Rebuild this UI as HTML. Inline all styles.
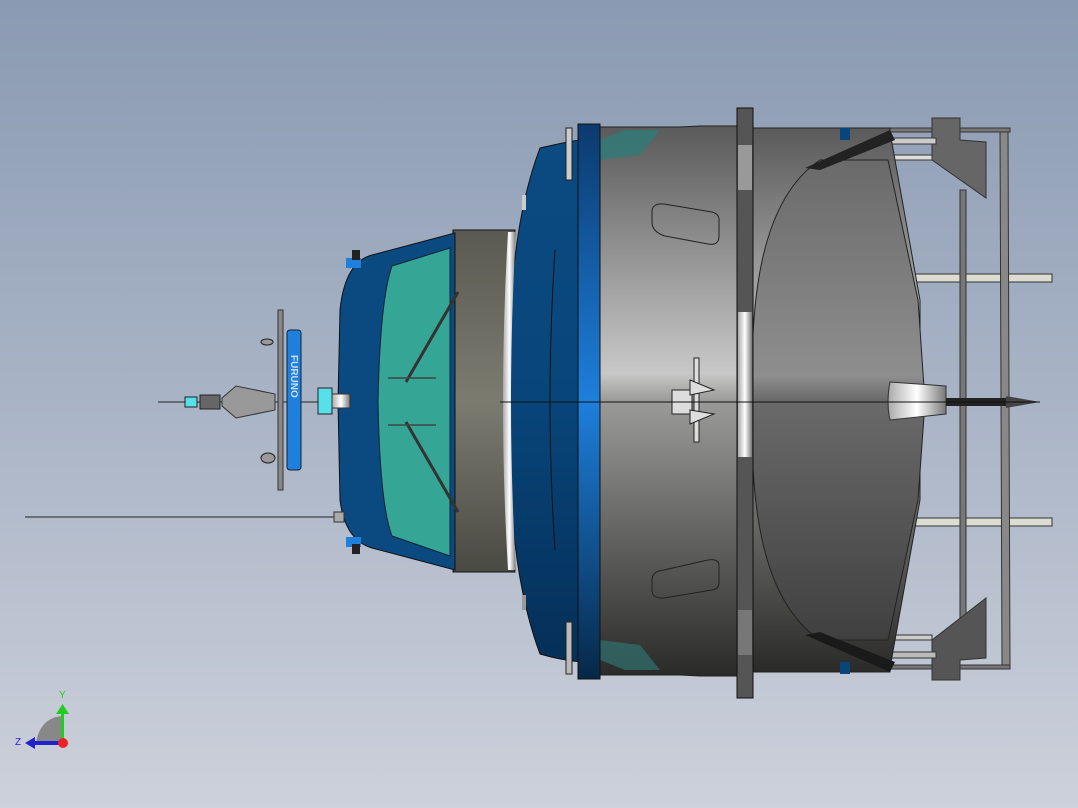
<!DOCTYPE html>
<html><head><meta charset="utf-8"><style>
html,body{margin:0;padding:0;width:1078px;height:808px;overflow:hidden}
body{background:linear-gradient(#8a9ab2,#a9b4c6 50%,#cdd1db);font-family:"Liberation Sans",sans-serif}
svg{position:absolute;left:0;top:0}
</style></head><body>
<svg width="1078" height="808" viewBox="0 0 1078 808">
<defs>
<linearGradient id="gbody" x1="0" y1="0" x2="0" y2="1">
<stop offset="0" stop-color="#5a5a5a"/><stop offset="0.45" stop-color="#c8c8c8"/><stop offset="0.5" stop-color="#9a9a98"/><stop offset="1" stop-color="#2a2a28"/></linearGradient>
<linearGradient id="gdome" x1="0" y1="0" x2="0" y2="1">
<stop offset="0" stop-color="#6a6a6a"/><stop offset="0.45" stop-color="#8e8e8e"/><stop offset="0.5" stop-color="#6a6a6a"/><stop offset="1" stop-color="#404040"/></linearGradient>
<linearGradient id="gring" x1="0" y1="0" x2="0" y2="1">
<stop offset="0" stop-color="#0b3a6e"/><stop offset="0.5" stop-color="#1e7fdc"/><stop offset="1" stop-color="#062848"/></linearGradient>
<linearGradient id="gdisk" x1="0" y1="0" x2="0" y2="1">
<stop offset="0" stop-color="#0b4b82"/><stop offset="0.5" stop-color="#08457a"/><stop offset="1" stop-color="#052f58"/></linearGradient>
<linearGradient id="gcol" x1="0" y1="0" x2="0" y2="1">
<stop offset="0" stop-color="#5a5a52"/><stop offset="0.5" stop-color="#7b7b70"/><stop offset="1" stop-color="#4a4a44"/></linearGradient>
<linearGradient id="gsh" x1="0" y1="0" x2="1" y2="0">
<stop offset="0" stop-color="#aaa"/><stop offset="0.5" stop-color="#fff"/><stop offset="1" stop-color="#777"/></linearGradient>
</defs>
<!-- rear frame -->
<g stroke="#333" stroke-width="1">
<rect x="905" y="274" width="147" height="8" fill="#dcdcd0"/>
<rect x="905" y="518" width="147" height="8" fill="#dcdcd0"/>
<rect x="960" y="190" width="6" height="440" fill="#777"/>
<path d="M1000 128 L1008 130 L1010 665 L1002 668 Z" fill="#888"/>
<rect x="890" y="128" width="120" height="4" fill="#777"/>
<rect x="890" y="665" width="120" height="4" fill="#777"/>
<path d="M932 118 L960 118 L960 140 L986 142 L986 198 L932 160 Z" fill="#666"/>
<path d="M932 680 L960 680 L960 660 L986 658 L986 598 L932 640 Z" fill="#555"/>
<rect x="888" y="138" width="48" height="6" fill="#ccc"/><rect x="892" y="155" width="40" height="5" fill="#ddd"/>
<rect x="888" y="652" width="48" height="6" fill="#bbb"/><rect x="892" y="635" width="40" height="5" fill="#ccc"/>
</g>
<!-- main body -->
<path d="M597 127 L680 127 L700 126 L740 126 L740 676 L700 676 L680 675 L597 675 Z" fill="url(#gbody)" stroke="#222"/>
<path d="M600 140 L625 130 L660 130 L640 155 L600 160 Z" fill="#2f7a78" opacity="0.8"/>
<path d="M600 660 L625 670 L660 670 L640 645 L600 640 Z" fill="#2f6a68" opacity="0.8"/>
<!-- aft section -->
<path d="M752 128 L890 128 L890 132 L920 300 L920 500 L890 668 L890 672 L752 672 Z" fill="url(#gbody)" stroke="#222"/>
<path d="M820 160 C760 200 750 300 752 402 C750 500 760 600 820 640 L888 640 L918 500 L925 402 L918 300 L888 160 Z" fill="url(#gdome)" stroke="#222"/>
<rect x="840" y="128" width="10" height="12" fill="#08457a"/><rect x="840" y="662" width="10" height="12" fill="#08457a"/>
<path d="M805 168 L890 130 L895 140 L820 170 Z" fill="#222"/>
<path d="M805 635 L890 672 L895 662 L820 632 Z" fill="#1a1a1a"/>
<!-- flange -->
<rect x="737" y="108" width="16" height="590" fill="#555" stroke="#111"/>
<rect x="738" y="145" width="14" height="45" fill="#999"/>
<rect x="738" y="312" width="14" height="145" fill="url(#gsh)"/>
<rect x="738" y="610" width="14" height="45" fill="#777"/>
<!-- windows -->
<path d="M652 212 Q652 203 664 204 L712 212 Q720 214 719 222 L719 236 Q719 246 708 244 L665 236 Q652 232 652 222 Z" fill="none" stroke="#222"/>
<path d="M652 580 Q652 571 664 570 L708 560 Q719 558 719 566 L719 580 Q720 589 712 590 L664 598 Q652 599 652 590 Z" fill="none" stroke="#222"/>
<!-- fitting -->
<g stroke="#222" fill="#ddd"><rect x="672" y="390" width="20" height="24"/><rect x="694" y="358" width="5" height="84"/><path d="M690 380 L714 390 L690 395 Z"/><path d="M690 424 L714 414 L690 410 Z"/></g>
<!-- exhaust cone -->
<path d="M890 382 L946 386 L946 414 L890 420 Q886 402 890 382 Z" fill="url(#gsh)" stroke="#333"/>
<rect x="946" y="398" width="60" height="8" fill="#222"/>
<path d="M1006 396 L1040 402 L1006 408 Z" fill="#444"/>
<!-- blue disk -->
<path d="M540 148 Q575 140 582 140 L582 662 Q560 660 540 654 Q505 560 510 402 Q505 240 540 148 Z" fill="url(#gdisk)" stroke="#111"/>
<path d="M555 250 Q545 402 555 550" fill="none" stroke="#111"/>
<rect x="522" y="195" width="4" height="15" fill="#ccc"/><rect x="522" y="595" width="4" height="15" fill="#999"/>
<!-- blue ring -->
<rect x="578" y="124" width="22" height="555" fill="url(#gring)" stroke="#111"/>
<path d="M566 128 L572 128 L572 180 L566 180 Z" fill="#ccc" stroke="#222"/>
<path d="M566 622 L572 622 L572 674 L566 674 Z" fill="#bbb" stroke="#222"/>
<!-- collar -->
<path d="M453 230 L515 230 Q505 402 515 572 L453 572 Z" fill="url(#gcol)" stroke="#111"/>
<path d="M508 232 Q498 402 508 570 L516 570 Q506 402 516 232 Z" fill="url(#gsh)"/>
<!-- cabin -->
<path d="M455 233 L372 255 Q345 262 340 310 L338 402 L340 500 Q345 540 372 548 L455 570 Z" fill="#0a4a80" stroke="#111"/>
<path d="M450 248 L392 266 Q380 300 378 402 Q380 505 392 536 L450 556 Z" fill="#35a595" stroke="#123"/>
<g stroke="#333" stroke-width="3"><line x1="458" y1="292" x2="406" y2="382"/><line x1="406" y1="422" x2="458" y2="512"/></g>
<g stroke="#444" stroke-width="1.5"><line x1="388" y1="378" x2="436" y2="378"/><line x1="388" y1="425" x2="436" y2="425"/></g>
<rect x="346" y="258" width="15" height="10" fill="#1e7fdc"/><rect x="352" y="250" width="8" height="10" fill="#222"/>
<rect x="346" y="537" width="15" height="10" fill="#1e7fdc"/><rect x="352" y="544" width="8" height="10" fill="#222"/>
<!-- mast -->
<line x1="158" y1="402" x2="340" y2="402" stroke="#222"/>
<line x1="25" y1="517" x2="340" y2="517" stroke="#222"/>
<rect x="334" y="512" width="10" height="10" fill="#aaa" stroke="#333"/>
<rect x="318" y="388" width="14" height="26" fill="#55e0ea" stroke="#222"/>
<rect x="332" y="394" width="18" height="14" fill="url(#gsh)" stroke="#333"/>
<path d="M222 398 L236 386 L275 394 L275 410 L236 418 L222 406 Z" fill="#999" stroke="#333"/>
<rect x="185" y="397" width="12" height="10" fill="#55e0ea" stroke="#222"/>
<rect x="200" y="395" width="20" height="14" fill="#666" stroke="#222"/>
<rect x="278" y="310" width="5" height="180" fill="#888" stroke="#333"/>
<rect x="287" y="330" width="14" height="140" rx="3" fill="#1e7fdc" stroke="#123"/>
<text x="0" y="0" transform="translate(291,355) rotate(90)" font-size="10" fill="#cde" font-weight="bold">FURUNO</text>
<ellipse cx="267" cy="342" rx="6" ry="3" fill="#999" stroke="#222"/>
<ellipse cx="268" cy="458" rx="7" ry="5" fill="#999" stroke="#222"/>
<!-- center line -->
<line x1="500" y1="402" x2="1040" y2="402" stroke="#111"/>
<!-- triad -->
<path d="M36 743 Q40 718 62 716 L62 743 Z" fill="#888"/>
<rect x="61" y="712" width="3" height="31" fill="#2c2"/>
<path d="M56 714 L62.5 704 L69 714 Z" fill="#2c2"/>
<rect x="33" y="741" width="30" height="4" fill="#22c"/>
<path d="M35 737 L25 743 L35 749 Z" fill="#22c"/>
<circle cx="63" cy="743" r="5" fill="#e22"/>
<text x="59" y="698" font-size="10" fill="#2c2">Y</text>
<text x="15" y="745" font-size="10" fill="#22c">Z</text>
</svg>
</body></html>
